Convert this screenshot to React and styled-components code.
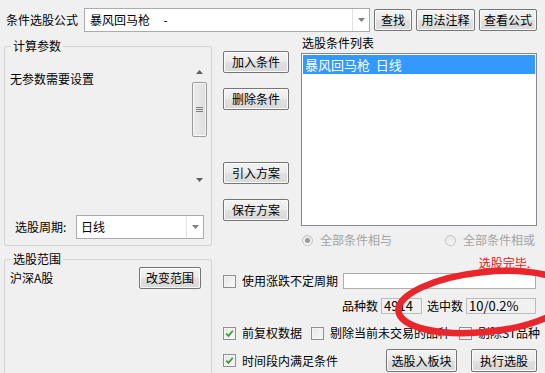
import React from 'react';
import styled, { createGlobalStyle } from 'styled-components';

const GlobalStyle = createGlobalStyle`
  html, body { margin: 0; padding: 0; background: #f0f0f0; }
  body {
    font-family: "Noto Sans CJK SC", "Microsoft YaHei", sans-serif;
    font-size: 12px; color: #000;
  }
  * { box-sizing: border-box; }
`;

const Dialog = styled.div`
  position: relative;
  width: 545px; height: 373px;
  overflow: hidden;
  background: #f0f0f0;
  font-size: 12px; line-height: 14px;
`;

const TopBar = styled.div`
  display: flex; align-items: center; gap: 4px;
  height: 24px;
  margin: 8px 0 0 6px;
`;
const TopLabel = styled.span`
  margin-right: 2px;
  white-space: nowrap;
`;

const Button = styled.button`
  width: ${p => p.$w}px; height: ${p => p.$h || 22}px;
  margin: ${p => (p.$push ? '37px 0 0' : 0)};
  padding: 0;
  font: inherit; font-size: 12px; line-height: 14px; color: #000;
  border: 1px solid #767676; border-radius: 2px;
  background: linear-gradient(#f3f3f3 0%, #ebebeb 50%, #e0e0e0 51%, #d9d9d9 100%);
  box-shadow: inset 0 0 0 1px #fbfbfb;
  white-space: nowrap;
`;

const Combo = styled.div`
  display: flex; flex: none;
  width: ${p => p.$w}px; height: 24px;
  border: 1px solid #a9abb0;
  background: #fff;
`;
const ComboText = styled.div`
  flex: 1;
  display: flex; align-items: center;
  padding-left: ${p => p.$pad || 5}px;
  white-space: pre;
`;
const ComboArrow = styled.div`
  width: 17px;
  display: flex; align-items: center; justify-content: center;
  border-left: 1px solid #e2e2e2;
`;

const DownTri = ({ color = '#808080' }) => (
  <svg width="7" height="4" viewBox="0 0 7 4"><polygon points="0,0 7,0 3.5,4" fill={color} /></svg>
);
const UpTri = ({ color = '#606060' }) => (
  <svg width="7" height="4" viewBox="0 0 7 4"><polygon points="0,4 7,4 3.5,0" fill={color} /></svg>
);

const MainRow = styled.div`
  display: flex; align-items: flex-start;
  margin-top: ${p => p.$top}px;
  padding-left: 4px;
`;

const GroupBox = styled.fieldset`
  flex: none;
  width: 208px;
  min-height: ${p => p.$minH || 0}px;
  margin: ${p => p.$top || 0}px 0 0;
  padding: 0;
  min-width: 0;
  border: 1px solid #d3d3d3;
  border-radius: 3px;
`;
const GroupTitle = styled.legend`
  margin-left: 6px;
  padding: 0 2px;
  font-size: 12px; line-height: 14px;
`;
const GroupBody = styled.div`
  padding: ${p => p.$pad};
`;

const ParamArea = styled.div`
  display: flex;
  height: 125px;
`;
const ParamText = styled.div`
  flex: 1;
  padding: 9px 2px;
`;
const ScrollBar = styled.div`
  width: 17px;
  display: flex; flex-direction: column; align-items: center;
`;
const ScrollArrow = styled.div`
  height: 17px; width: 100%;
  display: flex; align-items: center; justify-content: center;
`;
const ScrollThumb = styled.div`
  width: 15px; height: 55px;
  margin-top: 2px;
  display: flex; align-items: center; justify-content: center;
  border: 1px solid #9a9a9a; border-radius: 2px;
  background: linear-gradient(to right, #ececec, #dedede);
  box-shadow: inset 0 0 0 1px #f7f7f7;
`;
const ScrollTrack = styled.div`
  flex: 1;
`;

const PeriodRow = styled.div`
  display: flex; align-items: center;
  margin-top: 27px;
  padding-left: 7px;
`;
const PeriodLabel = styled.span`
  width: 61px;
`;

const ButtonColumn = styled.div`
  display: flex; flex-direction: column; gap: 15px;
  margin-left: 11px;
  padding-top: 15px;
`;

const ListPanel = styled.div`
  display: flex; flex-direction: column;
  width: 236px;
  margin-left: 12px;
`;
const ListTitle = styled.div`
  padding-left: 1px;
`;
const ListBox = styled.div`
  height: 173px;
  margin-top: 3px;
  padding: 1px;
  border: 1px solid #828790;
  background: #fff;
`;
const ListItem = styled.div`
  height: 19px;
  padding-left: 2px;
  font-size: 13px; line-height: 19px;
  white-space: pre;
  color: ${p => (p.$selected ? '#fff' : '#000')};
  background: ${p => (p.$selected ? '#3399ff' : 'transparent')};
`;
const RadioRow = styled.div`
  display: flex; justify-content: space-between;
  margin-top: 7px;
  padding: 0 2px 0 1px;
`;
const RadioItem = styled.span`
  display: inline-flex; align-items: center; gap: 7px;
  color: #a3a3a3;
`;
const RadioDot = styled.span`
  width: 11px; height: 11px;
  display: inline-flex; align-items: center; justify-content: center;
  border: 1px solid #c2c2c2; border-radius: 50%;
  background: linear-gradient(#e6e6e6, #f8f8f8);
  &::after {
    content: '';
    width: 5px; height: 5px; border-radius: 50%;
    background: ${p => (p.$on ? '#9a9a9a' : 'transparent')};
  }
`;

const ScopeRow = styled.div`
  display: flex; align-items: center; justify-content: space-between;
  height: 22px;
  margin-top: 1px;
  padding: 0 10px 0 5px;
`;

const ResultPanel = styled.div`
  display: flex; flex-direction: column;
  width: 314px;
  margin-left: 11px;
`;
const Status = styled.div`
  margin-top: 4px;
  padding-right: 7px;
  text-align: right;
  color: #e4201b;
`;
const Line = styled.div`
  display: flex; align-items: center;
  height: ${p => p.$h}px;
  margin-top: ${p => p.$top}px;
  gap: ${p => p.$gap || 0}px;
  justify-content: ${p => p.$justify || 'flex-start'};
`;
const TextInput = styled.div`
  flex: 1;
  height: 16px;
  margin: 0 1px 0 5px;
  border: 1px solid #abadb3;
  background: #fff;
`;
const ReadBox = styled.div`
  width: ${p => p.$w}px; height: 16px;
  margin-left: 3px;
  padding-left: 2px;
  border: 1px solid #bcbcbc;
  font-size: 13px; line-height: 14px;
  white-space: nowrap;
`;
const CountLabel = styled.span`
  margin-left: ${p => p.$gap || 0}px;
`;
const ButtonPair = styled.div`
  display: flex; gap: 14px;
  margin-left: auto;
`;

const CheckItem = styled.span`
  display: inline-flex; align-items: center; gap: 6px;
  white-space: nowrap;
`;
const CheckBox = styled.span`
  width: 13px; height: 13px;
  display: inline-flex; align-items: center; justify-content: center;
  border: 1px solid #8f8f8f;
  background: linear-gradient(135deg, #e4e4e4, #fafafa);
  box-shadow: inset 0 0 0 1px #f4f4f4;
`;

const Check = ({ label, checked }) => (
  <CheckItem>
    <CheckBox>
      {checked && (
        <svg width="9" height="9" viewBox="0 0 9 9">
          <path d="M1.2 4.6 L3.5 6.9 L7.8 1.8" fill="none" stroke="#3c9a3a" strokeWidth="1.7" />
        </svg>
      )}
    </CheckBox>
    {label}
  </CheckItem>
);

// red hand-drawn ring over the result counts
const Overlay = styled.svg`
  position: absolute; left: 0; top: 0;
  pointer-events: none;
`;

export default function App() {
  return (
    <Dialog>
      <GlobalStyle />

      <TopBar>
        <TopLabel>条件选股公式</TopLabel>
        <Combo $w={286}>
          <ComboText>{'暴风回马枪     -'}</ComboText>
          <ComboArrow><DownTri /></ComboArrow>
        </Combo>
        <Button $w={38}>查找</Button>
        <Button $w={59}>用法注释</Button>
        <Button $w={58}>查看公式</Button>
      </TopBar>

      <MainRow $top={4}>
        <GroupBox $top={3}>
          <GroupTitle>计算参数</GroupTitle>
          <GroupBody $pad="10px 3px 6px 3px">
            <ParamArea>
              <ParamText>无参数需要设置</ParamText>
              <ScrollBar>
                <ScrollArrow><UpTri /></ScrollArrow>
                <ScrollThumb>
                  <svg width="7" height="7" viewBox="0 0 7 7">
                    <path d="M0 1.5H7M0 3.5H7M0 5.5H7" stroke="#7c7c7c" strokeWidth="1" />
                  </svg>
                </ScrollThumb>
                <ScrollTrack />
                <ScrollArrow><DownTri color="#606060" /></ScrollArrow>
              </ScrollBar>
            </ParamArea>
            <PeriodRow>
              <PeriodLabel>选股周期:</PeriodLabel>
              <Combo $w={128}>
                <ComboText $pad={4}>日线</ComboText>
                <ComboArrow><DownTri /></ComboArrow>
              </Combo>
            </PeriodRow>
          </GroupBody>
        </GroupBox>

        <ButtonColumn>
          <Button $w={66}>加入条件</Button>
          <Button $w={66}>删除条件</Button>
          <Button $w={66} $push>引入方案</Button>
          <Button $w={66}>保存方案</Button>
        </ButtonColumn>

        <ListPanel>
          <ListTitle>选股条件列表</ListTitle>
          <ListBox>
            <ListItem $selected>{'暴风回马枪  日线'}</ListItem>
          </ListBox>
          <RadioRow>
            <RadioItem><RadioDot $on />全部条件相与</RadioItem>
            <RadioItem><RadioDot />全部条件相或</RadioItem>
          </RadioRow>
        </ListPanel>
      </MainRow>

      <MainRow $top={5}>
        <GroupBox $minH={140}>
          <GroupTitle>选股范围</GroupTitle>
          <ScopeRow>
            <span>沪深A股</span>
            <Button $w={62}>改变范围</Button>
          </ScopeRow>
        </GroupBox>

        <ResultPanel>
          <Status>选股完毕.</Status>
          <Line $h={16} $top={3}>
            <Check label="使用涨跌不定周期" />
            <TextInput />
          </Line>
          <Line $h={16} $top={9} $justify="flex-end">
            <CountLabel>品种数</CountLabel>
            <ReadBox $w={41}>4914</ReadBox>
            <CountLabel $gap={5}>选中数</CountLabel>
            <ReadBox $w={70}>10/0.2%</ReadBox>
            <CountLabel $gap={1} />
          </Line>
          <Line $h={14} $top={12} $gap={9}>
            <Check label="前复权数据" checked />
            <Check label="剔除当前未交易的品种" />
            <Check label="剔除ST品种" />
          </Line>
          <Line $h={23} $top={9}>
            <Check label="时间段内满足条件" checked />
            <ButtonPair>
              <Button $w={71} $h={23}>选股入板块</Button>
              <Button $w={66} $h={23}>执行选股</Button>
            </ButtonPair>
          </Line>
        </ResultPanel>
      </MainRow>

      <Overlay width="545" height="373" viewBox="0 0 545 373">
        <ellipse cx="485" cy="302" rx="87" ry="30" transform="rotate(-6 485 302)"
          fill="none" stroke="#e8262b" strokeWidth="6.5" />
      </Overlay>
    </Dialog>
  );
}
